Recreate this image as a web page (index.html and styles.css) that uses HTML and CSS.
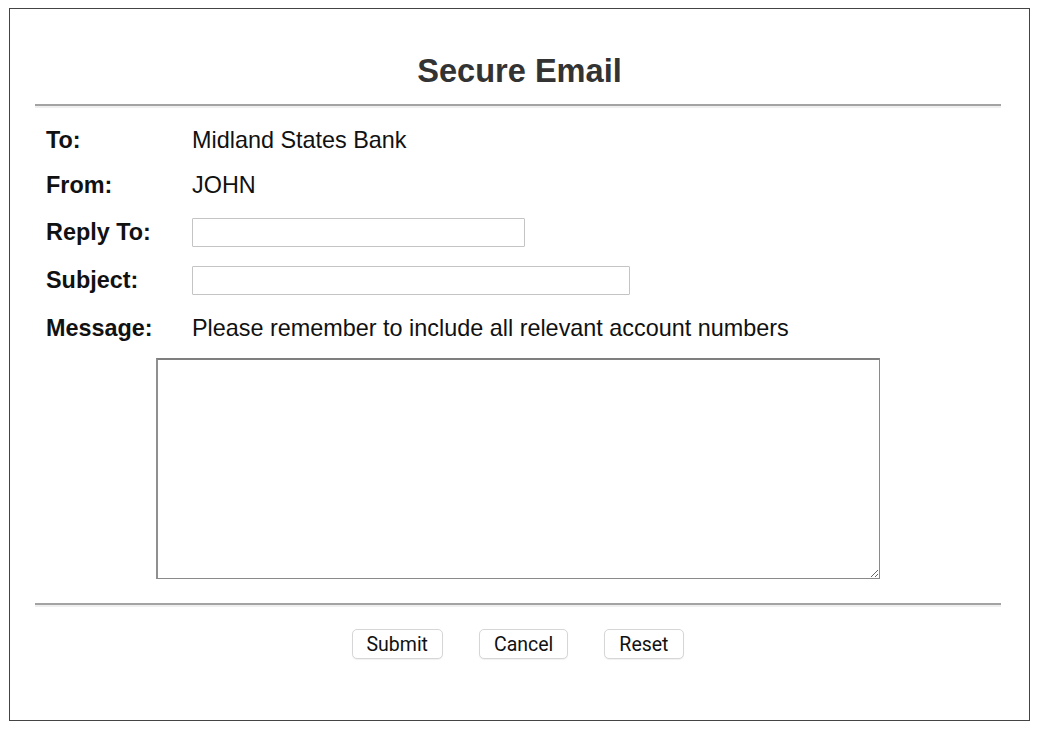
FILE: index.html
```html
<!DOCTYPE html>
<html>
<head>
<meta charset="utf-8">
<title>Secure Email</title>
<link rel="stylesheet" href="styles.css">
</head>
<body>
<div class="box">
  <h1 class="title">Secure Email</h1>
  <hr class="rule">
  <div class="fields">
    <div class="row r1"><span class="label">To:</span><span class="value">Midland States Bank</span></div>
    <div class="row r2"><span class="label">From:</span><span class="value">JOHN</span></div>
    <div class="row r3"><span class="label">Reply To:</span><input class="input short" type="text"></div>
    <div class="row r4"><span class="label">Subject:</span><input class="input long" type="text"></div>
    <div class="row r5"><span class="label">Message:</span><span class="value">Please remember to include all relevant account numbers</span></div>
  </div>
  <div class="msgwrap"><textarea class="message"></textarea></div>
  <hr class="rule rule2">
  <div class="buttons">
    <button class="btn">Submit</button>
    <button class="btn">Cancel</button>
    <button class="btn">Reset</button>
  </div>
</div>
</body>
</html>
```
FILE: styles.css
```css
html, body {
  margin: 0;
  padding: 0;
  background: #fff;
}
body {
  padding: 8px 10px 10px 9px;
  font-family: "Liberation Sans", Arial, sans-serif;
  color: #111;
}
.box {
  border: 1px solid #444;
  box-sizing: border-box;
  height: 713px;
  display: flex;
  flex-direction: column;
}
.title {
  margin: 0;
  padding-top: 42px;
  height: 53px;
  line-height: 40px;
  font-size: 32.6px;
  font-weight: bold;
  color: #333;
  text-align: center;
}
.rule {
  width: 966px;
  margin: 0 0 0 25px;
  height: 0;
  border: 0;
  border-top: 2px solid #a3a3a3;
  border-bottom: 2px solid #efefef;
}
.fields {
  padding-left: 36px;
  padding-top: 10px;
  display: flex;
  flex-direction: column;
}
.row {
  display: flex;
  align-items: center;
  font-size: 23.4px;
}
.r1 { height: 45px; }
.r2 { height: 45px; }
.r3 { height: 48px; }
.r4 { height: 49px; }
.r5 { height: 46px; }
.label {
  width: 146px;
  font-weight: bold;
  color: #111;
}
.value {
  color: #111;
}
.input {
  height: 29px;
  box-sizing: border-box;
  border: 1px solid #c4c4c4;
  border-radius: 1px;
  background: #fff;
  margin: 0;
  padding: 0 4px;
}
.short { width: 333px; }
.long { width: 438px; }
.msgwrap {
  display: flex;
  justify-content: center;
  padding-top: 7px;
  padding-right: 3px;
}
.message {
  width: 724px;
  height: 221px;
  box-sizing: border-box;
  margin: 0;
  border: 1px solid #8a8a8a;
  border-left: 2px solid #8f8f8f;
  border-top: 2px solid #7f7f7f;
  background: #fff;
  resize: both;
}
.rule2 {
  margin-top: 24px;
}
.buttons {
  display: flex;
  justify-content: center;
  padding-top: 22px;
  padding-right: 4px;
  gap: 36px;
}
.btn {
  height: 30px;
  box-sizing: border-box;
  background: #fff;
  border: 1px solid #d6d6d6;
  border-radius: 5px;
  font-family: Roboto, "Noto Sans", sans-serif;
  font-size: 19.5px;
  color: #111;
  padding: 0 14px;
  box-shadow: 0 1px 1px rgba(0,0,0,0.06);
}
```
